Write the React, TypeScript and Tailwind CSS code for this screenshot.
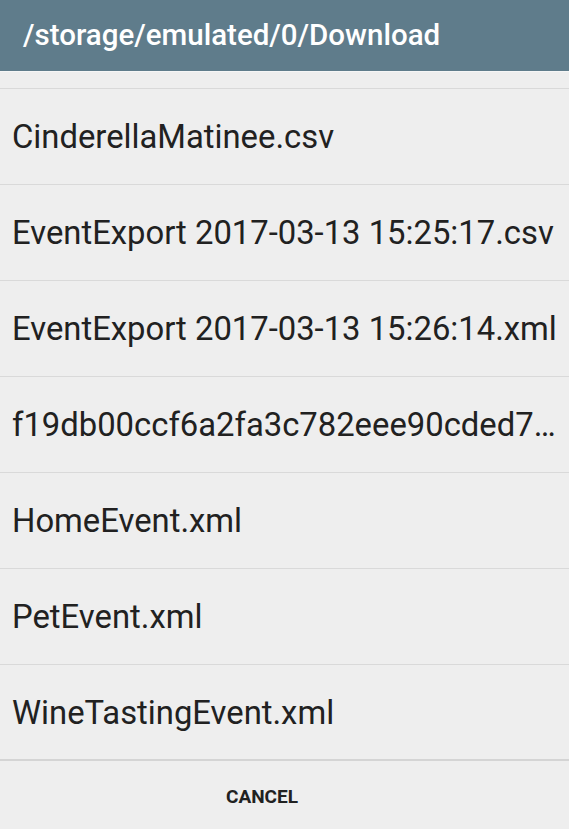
import React from 'react';

const files = [
  'CinderellaMatinee.csv',
  'EventExport 2017-03-13 15:25:17.csv',
  'EventExport 2017-03-13 15:26:14.xml',
  'f19db00ccf6a2fa3c782eee90cded7…',
  'HomeEvent.xml',
  'PetEvent.xml',
  'WineTastingEvent.xml',
];

const App: React.FC = () => {
  return (
    <div className="w-[569px] h-[829px] bg-[#eeeeee] flex flex-col overflow-hidden" style={{ fontFamily: 'Roboto, "Noto Sans", sans-serif' }}>
      <div className="h-[71px] shrink-0 bg-[#5f7c8b] flex items-center px-[23px]">
        <h1 className="text-white text-[29.5px] font-medium">/storage/emulated/0/Download</h1>
      </div>
      <div className="flex-1 flex flex-col overflow-hidden">
        <div className="h-[17px] shrink-0 border-t border-[#f6f6f6]" />
        {files.map((f) => (
          <div key={f} className="h-[96px] shrink-0 border-t border-[#d9d9d9] flex items-center pl-[12px] pr-[12px] pt-[2px]">
            <span className="text-[32.8px] text-[#212121] whitespace-nowrap">{f}</span>
          </div>
        ))}
      </div>
      <div className="h-[70px] shrink-0 border-t-2 border-[#d4d4d4] flex items-center justify-center pr-[45px] pt-[4px]">
        <button className="text-[19px] font-bold text-[#212121] uppercase">Cancel</button>
      </div>
    </div>
  );
};

export default App;
